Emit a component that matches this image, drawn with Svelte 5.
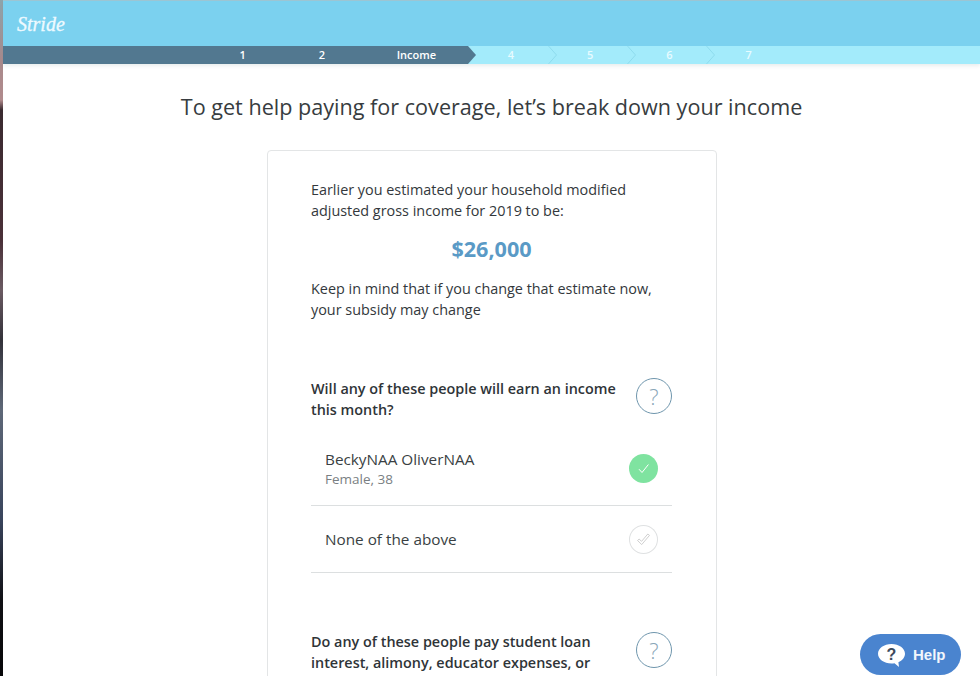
<script lang="ts">
  const steps = [
    { label: '1', done: true },
    { label: '2', done: true },
    { label: 'Income', done: true, current: true },
    { label: '4' },
    { label: '5' },
    { label: '6' },
    { label: '7', last: true },
  ]

  const people = [
    { name: 'BeckyNAA OliverNAA', detail: 'Female, 38', checked: true },
    { name: 'None of the above', checked: false },
  ]
</script>

<div class="page">
  <div class="desktop-edge"></div>
  <div class="app-window">
    <header class="site-header">
      <div class="brand"><span class="logo">Stride</span></div>
      <nav class="progress">
        {#each steps as step}
          <div class="step" class:done={step.done} class:current={step.current}>
            <span>{step.label}</span>
            {#if !step.done && !step.last}
              <svg class="chevron" viewBox="0 0 9 18" width="9" height="18" aria-hidden="true">
                <path d="M0.500 0l8 9-8 9" fill="none" stroke="#8edbee" stroke-width="1" />
              </svg>
            {/if}
          </div>
        {/each}
      </nav>
    </header>

    <main class="content">
      <h1>To get help paying for coverage, let’s break down your income</h1>

      <section class="card">
        <p>Earlier you estimated your household modified adjusted gross income for 2019 to be:</p>
        <div class="amount">$26,000</div>
        <p>Keep in mind that if you change that estimate now, your subsidy may change</p>

        <div class="question first">
          <strong>Will any of these people will earn an income this month?</strong>
          <button class="hint">?</button>
        </div>

        <div class="options">
          {#each people as person}
            <div class="option" class:with-detail={person.detail}>
              <div>
                <div class="name">{person.name}</div>
                {#if person.detail}<div class="detail">{person.detail}</div>{/if}
              </div>
              <span class="tick" class:on={person.checked}>
                <svg viewBox="0 0 29 29" width="29" height="29" aria-hidden="true">
                  {#if person.checked}
                    <path d="M10 15.200l3 3.300 6.400-8" fill="none" stroke="#fff" stroke-width="1" />
                  {:else}
                    <path d="M8.500 15.500l1.600-1.400 2.500 2.200 6.200-7.300 1.700 1.400-7.800 9.200z" fill="none" stroke="#d0d0d0" stroke-width="1" />
                  {/if}
                </svg>
              </span>
            </div>
          {/each}
        </div>

        <div class="question second">
          <strong>Do any of these people pay student loan interest, alimony, educator expenses, or</strong>
          <button class="hint">?</button>
        </div>
      </section>
    </main>
  </div>

  <button class="help">
    <svg viewBox="0 0 27 23" width="27" height="23" aria-hidden="true">
      <path d="M13.500 0C6 0 0 4.400 0 9.800s6 9.800 13.500 9.800c1 0 2-.1 3-.3L21 23l-.6-4.800c3.900-1.700 6.600-4.800 6.600-8.400C27 4.400 21 0 13.500 0z" fill="#fff" />
      <text x="13.500" y="15.500" text-anchor="middle" class="help-mark">?</text>
    </svg>
    <span>Help</span>
  </button>
</div>

<style>
  :global(body) {
    margin: 0;
    overflow: hidden;
    background: #fff;
  }

  .page {
    display: flex;
    height: 676px;
    overflow: hidden;
    font-family: 'Open Sans', sans-serif;
    color: #33383c;
  }

  .desktop-edge {
    flex: 0 0 3px;
    background: linear-gradient(
      to bottom,
      #8fa5ac 0,
      #a98a8c 60px,
      #b08a8c 100px,
      #3a2a30 110px,
      #4a3038 240px,
      #6a5a62 290px,
      #33323a 340px,
      #5e6878 410px,
      #39445c 520px,
      #101014 600px,
      #060608 676px
    );
  }

  .app-window {
    flex: 1;
    min-width: 0;
  }

  .site-header {
    border-top: 1px solid #9cc5d3;
    box-shadow: 0 2px 4px rgba(90, 120, 130, 0.14);
  }

  .brand {
    height: 45px;
    background: #7bd1ef;
    display: flex;
    align-items: center;
    padding-left: 14px;
  }

  .logo {
    font-family: 'Liberation Serif', serif;
    font-style: italic;
    font-size: 20px;
    color: #eefaff;
    position: relative;
    top: 1px;
    -webkit-text-stroke: 0.3px #eefaff;
  }

  .progress {
    display: flex;
    height: 18px;
    padding-left: 200px;
    background: linear-gradient(to right, #527890 0, #527890 300px, #a3ebfb 300px);
  }

  .step {
    position: relative;
    width: 79.200px;
    text-align: center;
    font-size: 11px;
    line-height: 18px;
    font-weight: 600;
    color: #e8fbff;
  }

  .chevron {
    position: absolute;
    top: 0;
    right: -6px;
  }

  .step.done {
    background: #527890;
    color: #fff;
  }

  .step.current {
    width: 107px;
    margin-right: 3px;
  }

  .step.current span {
    position: relative;
    left: 1.500px;
  }

  .step.current::after {
    content: '';
    position: absolute;
    top: 0;
    left: 100%;
    width: 0;
    height: 0;
    border-top: 9px solid transparent;
    border-bottom: 9px solid transparent;
    border-left: 8px solid #527890;
  }

  .content {
    padding-top: 27px;
  }

  h1 {
    margin: 0 0 27px;
    text-align: center;
    font-size: 21.600px;
    line-height: 32px;
    font-weight: 400;
    color: #373c40;
  }

  .card {
    box-sizing: border-box;
    width: 450px;
    margin-left: 264px;
    padding: 28px 44px 60px 43px;
    border: 1px solid #e3e5e6;
    border-radius: 4px;
  }

  p {
    margin: 0;
    font-size: 14.400px;
    line-height: 21px;
  }

  .amount {
    margin: 13px 0 14px;
    text-align: center;
    font-size: 21.600px;
    line-height: 30px;
    font-weight: 700;
    color: #5a9ac6;
  }

  .question {
    display: flex;
    justify-content: space-between;
    font-size: 14.400px;
    line-height: 21px;
  }

  .question strong {
    width: 320px;
    font-weight: 600;
    color: #2f3438;
  }

  .question.first {
    margin-top: 58px;
  }

  .question.second {
    margin-top: 58px;
  }

  .hint {
    flex: 0 0 36px;
    width: 36px;
    height: 36px;
    margin-top: 0;
    padding: 0;
    background: #fff;
    border: 1px solid #6f96ad;
    border-radius: 50%;
    color: #8aa6b8;
    font-family: 'Open Sans', sans-serif;
    font-size: 22px;
    font-weight: 300;
    line-height: 32px;
  }

  .question.second .hint {
    margin-top: 1px;
  }

  .options {
    margin-top: 11px;
  }

  .option {
    display: flex;
    align-items: center;
    justify-content: space-between;
    height: 66px;
    padding: 0 14px;
    border-bottom: 1px solid #dcdfe0;
  }

  .option.with-detail {
    height: 74px;
  }

  .name {
    font-size: 15.300px;
    line-height: 22px;
    color: #3a3f43;
  }

  .detail {
    font-size: 13.500px;
    line-height: 19px;
    color: #7a7f83;
  }

  .tick {
    width: 29px;
    height: 29px;
    box-sizing: border-box;
    border-radius: 50%;
    display: block;
    box-shadow: inset 0 0 0 1px #dfe1e2;
  }

  .tick svg {
    display: block;
  }

  .tick.on {
    background: #7fe3a0;
    box-shadow: none;
  }

  .help {
    position: fixed;
    left: 860px;
    top: 634px;
    width: 101px;
    height: 41px;
    display: flex;
    align-items: center;
    gap: 8px;
    padding: 0 0 0 18px;
    background: #4a84cf;
    border: none;
    border-radius: 21px;
    color: #f2f6fc;
    font-family: 'Liberation Sans', sans-serif;
    font-size: 15px;
    font-weight: 700;
  }

  .help svg {
    position: relative;
    top: 1px;
  }

  .help-mark {
    font-family: 'Liberation Sans', sans-serif;
    font-size: 16px;
    font-weight: 700;
    fill: #3c4a5c;
  }
</style>
